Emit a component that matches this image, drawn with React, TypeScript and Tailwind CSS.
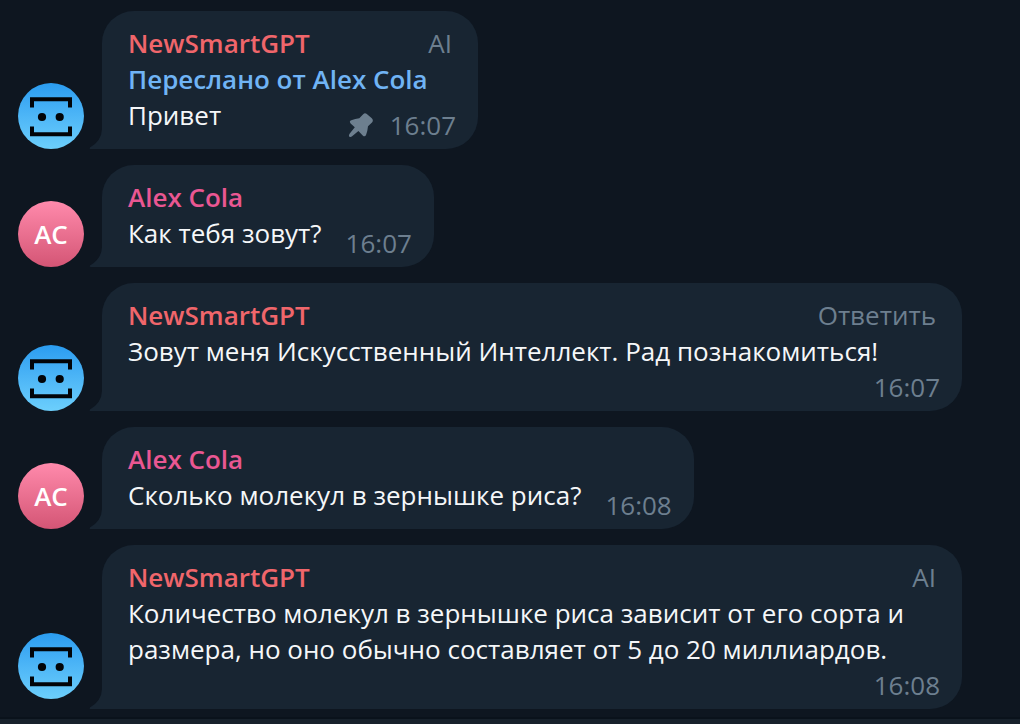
import type { ReactNode } from "react";
import clsx from "clsx";

type Message = {
  id: number;
  author: "bot" | "user";
  action?: string;
  forwarded?: string;
  text: string;
  time: string;
  pinned?: boolean;
  layout: "forward" | "inline" | "block";
};

const messages: Message[] = [
  { id: 1, author: "bot", action: "AI", forwarded: "Переслано от Alex Cola", text: "Привет", time: "16:07", pinned: true, layout: "forward" },
  { id: 2, author: "user", text: "Как тебя зовут?", time: "16:07", layout: "inline" },
  { id: 3, author: "bot", action: "Ответить", text: "Зовут меня Искусственный Интеллект. Рад познакомиться!", time: "16:07", layout: "block" },
  { id: 4, author: "user", text: "Сколько молекул в зернышке риса?", time: "16:08", layout: "inline" },
  { id: 5, author: "bot", action: "AI", text: "Количество молекул в зернышке риса зависит от его сорта и размера, но оно обычно составляет от 5 до 20 миллиардов.", time: "16:08", layout: "block" },
];

function BotAvatar() {
  return (
    <svg viewBox="0 0 66 66" className="sticky bottom-[25px] size-[66px] shrink-0 rounded-full bg-linear-to-b from-[#2a9cf0] to-[#6ccffc]" aria-hidden="true">
      <g fill="none" stroke="#020408" strokeWidth="4">
        <path d="M14 24.5V16.3H52V24.5" />
        <path d="M14 43.5V51.3H52V43.5" />
      </g>
      <circle cx="24" cy="34" r="4.1" fill="#020408" />
      <circle cx="41.7" cy="34" r="4.1" fill="#020408" />
    </svg>
  );
}

function UserAvatar() {
  return (
    <div className="sticky bottom-[25px] flex size-[66px] shrink-0 items-center justify-center rounded-full bg-linear-to-b from-[#ff8aac] to-[#d45575] font-semibold text-white">
      AC
    </div>
  );
}

function PinIcon() {
  return (
    <svg viewBox="0 0 26 26" className="size-[26px]" fill="#6d7f8f" aria-hidden="true">
      <path d="M15.2 2.2Q16.8.5 18.5 1.8L23.8 6.2Q25.8 8.4 24 10.4L20 14.3Q19.6 18.8 18.2 22.4Q17 25.6 14.7 23.4L10.4 19L3.8 24.6Q2.2 25.5 1.2 24.4Q.4 23.3 1.6 21.7L6.8 15.2L2.6 11.4Q.8 9.2 3.3 8.3Q7.2 6.8 11.3 6.3Z" />
    </svg>
  );
}

function Bubble({ layout, children }: { layout: Message["layout"]; children: ReactNode }) {
  return (
    <div
      className={clsx(
        "relative min-w-0 rounded-[32px] rounded-bl-none bg-[#182532] pt-3.5 pr-[22px] pb-1.5 pl-[26px]",
        layout === "forward" && "w-[376px]",
        layout === "block" && "w-full max-w-[860px]",
      )}
    >
      <svg viewBox="0 0 13 20" className="absolute right-full bottom-0 h-5 w-[13px]" fill="#182532" aria-hidden="true">
        <path d="M13 0Q12.5 12 1 18.5Q0 20 2 20H13Z" />
      </svg>
      {children}
    </div>
  );
}

function MessageRow({ message }: { message: Message }) {
  const bot = message.author === "bot";
  return (
    <li className="flex items-end gap-[18px]">
      {bot ? <BotAvatar /> : <UserAvatar />}
      <Bubble layout={message.layout}>
        <div className="flex justify-between pr-1">
          <span className={clsx("font-semibold", bot ? "text-[#f0666b]" : "text-[#ea5792]")}>{bot ? "NewSmartGPT" : "Alex Cola"}</span>
          {message.action && <button type="button" className="text-[#6d7f8f]">{message.action}</button>}
        </div>
        {message.forwarded && <p className="font-semibold text-[#70b4f5]">{message.forwarded}</p>}
        <div className={clsx("flex", message.layout === "block" ? "flex-col" : "items-end justify-between gap-6")}>
          <p className={clsx("text-[#f5f7f9]", message.layout !== "block" && "pb-[10px]")}>{message.text}</p>
          <div className="flex items-center justify-end gap-4 text-[#6d7f8f]">
            {message.pinned && <PinIcon />}
            <time>{message.time}</time>
          </div>
        </div>
      </Bubble>
    </li>
  );
}

export default function App() {
  return (
    <main className="flex min-h-screen flex-col bg-[#0e1620] font-['Open_Sans','Noto_Sans',sans-serif] text-[26px] leading-9">
      <ul className="flex flex-col gap-4 px-[18px] pt-[11px] pb-2">
        {messages.map((message) => (
          <MessageRow key={message.id} message={message} />
        ))}
      </ul>
      <footer className="min-h-[7px] grow border-t-2 border-[#0a121b] bg-[#17212b]" />
    </main>
  );
}
